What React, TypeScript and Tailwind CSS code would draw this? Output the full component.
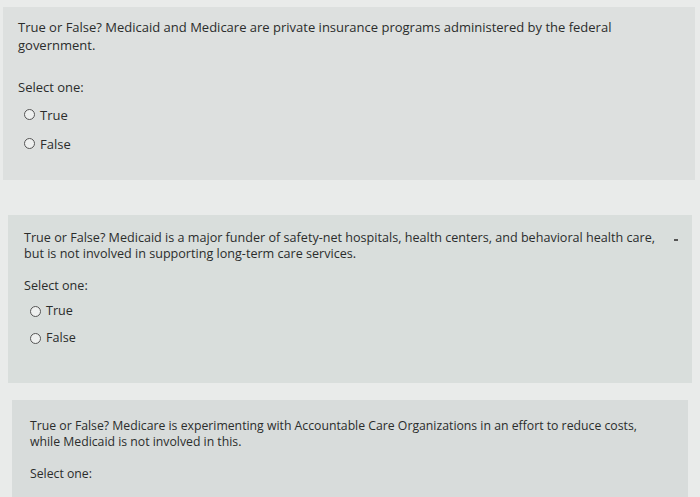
import React from "react";

type Q = {
  text: string[];
  showOptions: boolean;
};

const questions: Q[] = [
  {
    text: [
      "True or False? Medicaid and Medicare are private insurance programs administered by the federal",
      "government.",
    ],
    showOptions: true,
  },
  {
    text: [
      "True or False? Medicaid is a major funder of safety-net hospitals, health centers, and behavioral health care,",
      "but is not involved in supporting long-term care services.",
    ],
    showOptions: true,
  },
  {
    text: [
      "True or False? Medicare is experimenting with Accountable Care Organizations in an effort to reduce costs,",
      "while Medicaid is not involved in this.",
    ],
    showOptions: false,
  },
];

function Radio({ label, h }: { label: string; h: string }) {
  return (
    <label className={"flex items-center gap-[5px] " + h}>
      <span className="w-[11px] h-[11px] rounded-full border border-[#555] bg-[#eef0ef]" />
      <span>{label}</span>
    </label>
  );
}

export default function App() {
  return (
    <div
      className="w-[700px] h-[497px] overflow-hidden bg-[#e9ebea] text-[#2b2d2c] text-[13px] leading-[18px]"
      style={{ fontFamily: '"Open Sans", "Noto Sans", sans-serif' }}
    >
      {/* question 1 */}
      <div className="mt-[7px] ml-[3px] mr-[5px] h-[173px] bg-[#dde0df] pl-[15px] pt-[11px]">
        <p>{questions[0].text[0]}</p>
        <p>{questions[0].text[1]}</p>
        <p className="mt-[24px] mb-[4px]">Select one:</p>
        <div className="pl-[6px]">
          <Radio label="True" h="h-[29px]" />
          <Radio label="False" h="h-[29px]" />
        </div>
      </div>

      {/* question 2 */}
      <div className="relative mt-[35px] ml-[8px] mr-[8px] h-[168px] bg-[#d9dedc] pl-[16px] pt-[15px] text-[12.6px] leading-[16px]">
        <p>{questions[1].text[0]}</p>
        <p>{questions[1].text[1]}</p>
        <p className="mt-[16px] mb-[4px]">Select one:</p>
        <div className="pl-[6px]">
          <Radio label="True" h="h-[26px]" />
          <Radio label="False" h="h-[28px]" />
        </div>
        <span className="absolute right-[14px] top-[24px] w-[4px] h-[2px] bg-[#555]" />
      </div>

      {/* question 3 - runs past the bottom of the screen */}
      <div className="mt-[17px] ml-[12px] mr-[12px] h-[100px] bg-[#d8dcdb] pl-[18px] pt-[18px] text-[12.25px] leading-[16px]">
        <p>{questions[2].text[0]}</p>
        <p>{questions[2].text[1]}</p>
        <p className="mt-[16px]">Select one:</p>
      </div>
    </div>
  );
}
